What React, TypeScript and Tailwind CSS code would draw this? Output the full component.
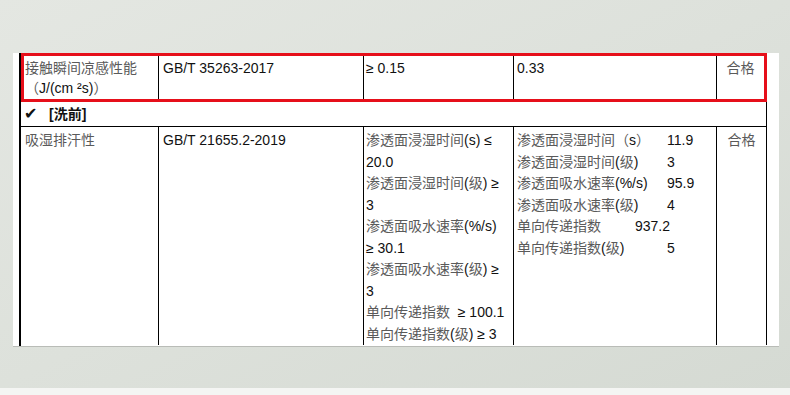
const cjk = /([\u3000-\u9fff\uff00-\uffef]+)/;

// latin text prints darker than the thin chinese glyphs in the scan
const T = ({ children }: { children: string }) => (
    <>
        {children.split(cjk).map((part, i) =>
            cjk.test(part) ? (
                <span key={i} className="text-[#5a5a5a]">{part}</span>
            ) : (
                <span key={i}>{part}</span>
            )
        )}
    </>
);

const testLines = [
    "渗透面浸湿时间(s) ≤",
    "20.0",
    "渗透面浸湿时间(级) ≥",
    "3",
    "渗透面吸水速率(%/s)",
    "≥ 30.1",
    "渗透面吸水速率(级) ≥",
    "3",
    "单向传递指数  ≥ 100.1",
    "单向传递指数(级) ≥ 3",
];

const results = [
    { label: "渗透面浸湿时间（s）", value: "11.9", w: "w-[150px]" },
    { label: "渗透面浸湿时间(级)", value: "3", w: "w-[150px]" },
    { label: "渗透面吸水速率(%/s)", value: "95.9", w: "w-[150px]" },
    { label: "渗透面吸水速率(级)", value: "4", w: "w-[150px]" },
    { label: "单向传递指数", value: "937.2", w: "w-[118px]" },
    { label: "单向传递指数(级)", value: "5", w: "w-[150px]" },
];

const App = () => {
    return (
        <div className="w-[790px] h-[395px] overflow-hidden flex flex-col text-[14px] text-[#111] font-['Liberation_Sans','Noto_Sans_CJK_SC',sans-serif]">

            {/* Backdrop */}
            <div className="h-[388px] pt-[52px] pl-[13px] bg-gradient-to-br from-[#e4e7e2] via-[#dde1db] to-[#d5dad3]">

                {/* Paper */}
                <div className="w-[766px] h-[294px] bg-white pl-[6px] border-b border-[#b9bcb7]">
                    <div className="w-[748px] h-full border-l-2 border-black">

                        {/* Row 1 - highlighted */}
                        <div className="mt-[1px] h-[49px] border-[3px] border-[#e60f1a] grid grid-cols-[135px_205px_150px_203px_1fr] leading-[20px]">
                            <div className="border-r border-black pl-[1px] pt-[2px]">
                                <div><T>接触瞬间凉感性能</T></div>
                                <div><T>（J/(cm ²s)）</T></div>
                            </div>
                            <div className="border-r border-black pl-[4px] pt-[2px]">GB/T 35263-2017</div>
                            <div className="border-r border-black pl-[2px] pt-[2px]">≥ 0.15</div>
                            <div className="border-r border-black pl-[3px] pt-[2px]">0.33</div>
                            <div className="text-center pt-[2px]"><T>合格</T></div>
                        </div>

                        {/* Row 2 */}
                        <div className="h-[25px] border-r border-b border-black flex items-center font-bold pl-[3px]">
                            <span className="font-['DejaVu_Sans',sans-serif] text-[16px] w-[25px] leading-none">✔</span>
                            <span>[洗前]</span>
                        </div>

                        {/* Row 3 */}
                        <div className="h-[218px] border-r border-black grid grid-cols-[138px_205px_150px_203px_1fr] leading-[21.5px]">
                            <div className="border-r border-black pl-[4px] pt-[3px]"><T>吸湿排汗性</T></div>
                            <div className="border-r border-black pl-[4px] pt-[3px]">GB/T 21655.2-2019</div>
                            <div className="border-r border-black pl-[2px] pt-[3px] whitespace-pre">
                                {testLines.map((line, i) => (
                                    <div key={i}><T>{line}</T></div>
                                ))}
                            </div>
                            <div className="border-r border-black pl-[3px] pt-[3px]">
                                {results.map((r) => (
                                    <div key={r.label} className="flex">
                                        <span className={r.w}><T>{r.label}</T></span>
                                        <span>{r.value}</span>
                                    </div>
                                ))}
                            </div>
                            <div className="text-center pt-[3px]"><T>合格</T></div>
                        </div>

                    </div>
                </div>
            </div>

            {/* Bottom strip */}
            <div className="flex-1 bg-[#f4f5f3]"></div>
        </div>
    );
};

export default App;
